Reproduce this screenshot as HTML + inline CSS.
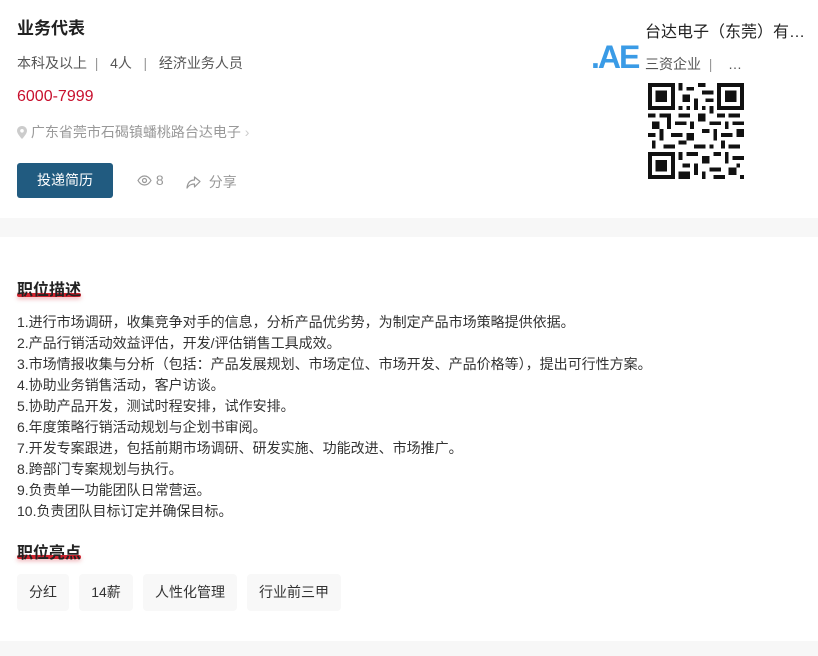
<!DOCTYPE html>
<html><head><meta charset="utf-8"><style>
*{margin:0;padding:0;box-sizing:border-box}
body{width:818px;height:656px;background:#fff;font-family:"Liberation Sans","Noto Sans CJK SC",sans-serif;color:#333;position:relative;overflow:hidden}
.a{position:absolute;white-space:nowrap}
.desc div{height:21px;line-height:21px;font-size:14px;color:#333}
.tag{position:absolute;top:574px;height:37px;line-height:37px;background:#f8f8f8;border-radius:4px;font-size:14px;color:#333;text-align:center}
.h{font-size:16px;font-weight:bold;color:#222}
.ul{position:absolute;height:4px;background:#d0232e;border-radius:2px;box-shadow:0 2px 4px rgba(208,35,46,.35)}
</style></head><body>
<div class="a" style="left:17px;top:17px;font-size:17px;font-weight:bold;color:#222;line-height:24px">业务代表</div>
<div class="a" style="left:17px;top:53px;font-size:14px;color:#555">本科及以上&nbsp;&nbsp;<span style="color:#999">|</span>&nbsp;&nbsp;&nbsp;4人&nbsp;&nbsp;&nbsp;<span style="color:#999">|</span>&nbsp;&nbsp;&nbsp;经济业务人员</div>
<div class="a" style="left:17px;top:88px;font-size:16px;color:#c8102e">6000-7999</div>
<div class="a" style="left:17px;top:122px;font-size:14px;color:#999"><svg width="10" height="13" viewBox="0 0 10 13" style="vertical-align:-2px"><path d="M5 0C2.2 0 0 2.1 0 4.8 0 8 5 13 5 13s5-5 5-8.2C10 2.1 7.8 0 5 0z" fill="#ccc"/><circle cx="5" cy="4.8" r="1.8" fill="#fff"/></svg> 广东省莞市石碣镇蟠桃路台达电子 <span style="color:#ccc">›</span></div>
<div class="a" style="left:17px;top:163px;width:96px;height:35px;background:#215b80;border-radius:3px;color:#fff;font-size:14px;line-height:35px;text-align:center">投递简历</div>
<div class="a" style="left:137px;top:172px;font-size:14px;color:#999"><svg width="15" height="11" viewBox="0 0 15 11" style="vertical-align:-1px"><path d="M1 5.5C3 2 5 1 7.5 1S12 2 14 5.5C12 9 10 10 7.5 10S3 9 1 5.5z" fill="none" stroke="#999" stroke-width="1.2"/><circle cx="7.5" cy="5.5" r="2" fill="none" stroke="#999" stroke-width="1.2"/></svg> 8</div>
<div class="a" style="left:186px;top:172px;font-size:14px;color:#999"><svg width="15" height="13" viewBox="0 0 15 13" style="vertical-align:-2px"><path d="M8.5 1v3C4 4 1.5 7 1 12c2-3 4-4 7.5-4v3L14 5.5z" fill="none" stroke="#999" stroke-width="1.2" stroke-linejoin="round"/></svg>&nbsp; 分享</div>
<div class="a" style="left:645px;top:18px;font-size:16px;color:#222">台达电子（东莞）有…</div>
<div class="a" style="left:591px;top:44px;font-size:32px;font-weight:bold;color:#3a9be6;letter-spacing:-2px;height:27px;overflow:hidden;width:52px;line-height:26px">.AE</div>
<div class="a" style="left:645px;top:54px;font-size:14px;color:#555">三资企业&nbsp;&nbsp;<span style="color:#999">|</span>&nbsp;&nbsp;&nbsp; …</div>
<svg class="a" style="left:648px;top:83px" width="96" height="96" viewBox="0 0 25 25" shape-rendering="crispEdges">
<rect width="25" height="25" fill="#fff"/>
<g fill="#111"><path d="M0 0h7v7H0zM18 0h7v7h-7zM0 18h7v7H0z"/></g>
<g fill="#fff"><path d="M1 1h5v5H1zM19 1h5v5h-5zM1 19h5v5H1z"/></g>
<g fill="#111"><path d="M2 2h3v3H2zM20 2h3v3h-3zM2 20h3v3H2z"/>
<path d="M8 0h1v2H8zM10 1h2v1h-2zM13 0h2v1h-2zM14 2h3v1h-3zM9 3h2v2H9zM12 4h1v3h-1zM15 4h2v1h-2zM8 6h1v1H8zM10 6h1v1h-1zM14 6h1v1h-1zM16 6h1v2h-1z
M0 8h2v1H0zM3 8h3v1H3zM8 8h3v1H8zM13 8h2v2h-2zM18 8h2v1h-2zM21 8h3v1h-3zM1 10h2v2H1zM5 9h1v3H5zM7 10h3v1H7zM11 10h1v2h-1zM16 10h3v1h-3zM20 10h1v2h-1zM22 10h3v1h-3z
M0 13h2v1H0zM3 12h1v3H3zM6 13h3v1H6zM10 13h2v2h-2zM14 12h2v1h-2zM17 12h1v3h-1zM19 13h3v1h-3zM23 12h2v2h-2zM1 15h1v2H1zM4 16h3v1H4zM8 15h2v1H8zM12 16h3v1h-3zM16 16h1v1h-1zM19 15h1v2h-1zM21 16h3v1h-3z
M8 18h1v2H8zM10 18h3v1h-3zM14 19h2v2h-2zM17 18h2v1h-2zM20 18h1v3h-1zM22 19h3v1h-3zM9 21h2v1H9zM12 21h1v3h-1zM16 22h3v1h-3zM21 22h2v2h-2zM8 23h3v2H8zM14 23h1v2h-1zM17 24h3v1h-3zM23 21h1v1h-1zM24 24h1v1h-1z"/></g>
</svg>
<div class="a" style="left:0;top:218px;width:818px;height:19px;background:#f7f7f7"></div>
<div class="ul" style="left:17px;top:293px;width:64px"></div>
<div class="a h" style="left:17px;top:276px">职位描述</div>
<div class="a desc" style="left:17px;top:312px">
<div>1.进行市场调研，收集竞争对手的信息，分析产品优劣势，为制定产品市场策略提供依据。</div>
<div>2.产品行销活动效益评估，开发/评估销售工具成效。</div>
<div>3.市场情报收集与分析（包括：产品发展规划、市场定位、市场开发、产品价格等），提出可行性方案。</div>
<div>4.协助业务销售活动，客户访谈。</div>
<div>5.协助产品开发，测试时程安排，试作安排。</div>
<div>6.年度策略行销活动规划与企划书审阅。</div>
<div>7.开发专案跟进，包括前期市场调研、研发实施、功能改进、市场推广。</div>
<div>8.跨部门专案规划与执行。</div>
<div>9.负责单一功能团队日常营运。</div>
<div>10.负责团队目标订定并确保目标。</div>
</div>
<div class="ul" style="left:17px;top:555px;width:64px"></div>
<div class="a h" style="left:17px;top:539px">职位亮点</div>
<div class="tag" style="left:17px;width:52px">分红</div>
<div class="tag" style="left:79px;width:54px">14薪</div>
<div class="tag" style="left:143px;width:94px">人性化管理</div>
<div class="tag" style="left:247px;width:94px">行业前三甲</div>
<div class="a" style="left:0;top:641px;width:818px;height:15px;background:#f7f7f7"></div>
</body></html>
